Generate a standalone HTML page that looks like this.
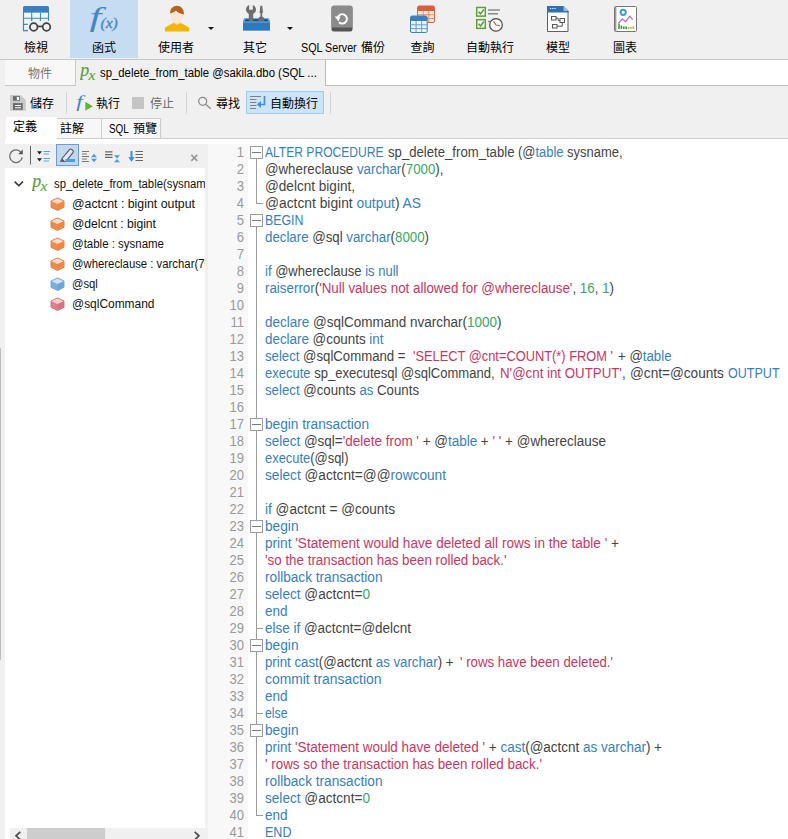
<!DOCTYPE html>
<html lang="zh-Hant">
<head>
<meta charset="utf-8">
<title>sp_delete_from_table @sakila.dbo (SQL Server)</title>
<style>
*{box-sizing:border-box;margin:0;padding:0}
html,body{width:788px;height:839px;overflow:hidden}
body{position:relative;background:#f0f0f0;font-family:"Liberation Sans","Noto Sans CJK TC",sans-serif;font-size:12px;color:#000}
.abs{position:absolute}
/* top toolbar */
#tb{position:absolute;left:0;top:0;width:788px;height:59px;background:#f0f0f0}
#tbline{position:absolute;left:0;top:59px;width:788px;height:1px;background:#c6c6c6}
.tbtn{position:absolute;top:0;height:58px;text-align:center}
.tbtn .lbl{position:absolute;left:-20px;right:-20px;top:38.500px;height:18px;line-height:18px;font-size:12px;white-space:nowrap;color:#000}
.tbtn svg{position:absolute;top:4px;left:50%;margin-left:-16px}
.tbtn.sel{background:#c5dcf2}
.dd{position:absolute;top:26.500px;width:0;height:0;border-left:3.200px solid transparent;border-right:3.200px solid transparent;border-top:3.600px solid #111}
/* tab row */
#tab1{position:absolute;left:5px;top:60px;width:71px;height:26px;background:#f8f8f8;border-right:1px solid #c9c9c9;border-bottom:1px solid #c9c9c9;color:#777;text-align:center;line-height:28px;font-size:12px}
#tab2{position:absolute;left:76px;top:60px;width:249px;height:26px;background:#f0f0f0;line-height:27px;font-size:12px;white-space:nowrap}
#tabrest{position:absolute;left:325px;top:60px;width:463px;height:26px;background:#fff;border-left:1px solid #bdbdbd;border-bottom:1px solid #bdbdbd}
/* second toolbar */
.t2{position:absolute;top:95px;height:18px;line-height:18px;font-size:12px;white-space:nowrap}
.sep{position:absolute;width:1px;background:#d4d4d4}
#wrapbtn{position:absolute;left:246px;top:91px;width:78px;height:23px;background:#cce4f7;border:1px solid #9fcbee}
/* sub tabs */
.stab{position:absolute;top:118px;height:21px;background:#f7f7f7;border:1px solid #cdcdcd;border-left:none;font-size:12px;line-height:20px;white-space:nowrap}
#stab0{position:absolute;left:6px;top:117px;width:51px;height:23px;background:#fff;font-size:12px;line-height:20px}
#subline{position:absolute;left:57px;top:138px;width:731px;height:1px;background:#cdcdcd}
#band{position:absolute;left:5px;top:139px;width:783px;height:5px;background:#fff}
/* left panel */
#ltool{position:absolute;left:5px;top:144px;width:203px;height:24px;background:#f0f0f0}
#tree{position:absolute;left:5px;top:168px;width:200px;height:671px;background:#fff;overflow:hidden}
.trow{position:absolute;left:0;height:20px;line-height:20px;font-size:12px;white-space:nowrap;color:#111}
.trow span{display:inline-block;transform-origin:0 50%}
#hscroll{position:absolute;left:10px;top:828px;width:195px;height:17px;background:#f0f0f0}
#hthumb{position:absolute;left:17px;top:0;width:78px;height:17px;background:#cdcdcd}
/* editor */
#gut0{position:absolute;left:205px;top:144px;width:3px;height:695px;background:#f0f0f0}
#lnbg{position:absolute;left:208px;top:144px;width:40px;height:695px;background:#f8f8f8}
#ed{position:absolute;left:248px;top:144px;width:540px;height:695px;background:#fff}
.ln{position:absolute;left:208px;width:36px;text-align:right;height:17px;line-height:17px;font-size:14px;color:#9a9a9a;transform-origin:100% 50%;transform:scaleX(.93)}
.cl{position:absolute;left:265.5px;height:17px;line-height:17px;font-size:14px;white-space:pre;transform-origin:0 50%;color:#434343}
.b{color:#3580c3}.r{color:#cb365f}.g{color:#36aa63}.d{color:#434343}
.fb{position:absolute;left:250px;width:13px;height:13px;border:1px solid #9c9c9c;background:#fff}
.fb:after{content:"";position:absolute;left:1px;top:5px;width:9px;height:1px;background:#7a7a7a}
.fl{position:absolute;background:#9c9c9c}
</style>
</head>
<body>
<div id="tb">
 <div class="tbtn" style="left:3px;width:66px">
  <svg width="32" height="32" viewBox="0 0 32 32">
   <rect x="3.500" y="8" width="25" height="18.500" fill="#ecf8fd" stroke="#4089bd" stroke-width="1.100"/>
   <path d="M3 3.500A1.500 1.500 0 0 1 4.500 2h23A1.500 1.500 0 0 1 29 3.500V8.300H3z" fill="#3a80c1"/>
   <path d="M11.700 8.500V26M20.500 8.500V20M3.500 14.300H28.500M3.500 20.400H11" stroke="#4089bd" stroke-width="1.100" fill="none"/>
   <path d="M7.800 16.600H30V28H7.800z" fill="#f0f0f0"/>
   <path d="M11.700 14.300V17M20.500 14.300V17M28.500 14V16.800" stroke="#4089bd" stroke-width="1.100" fill="none"/>
   <path d="M3.500 14V26.600H8" stroke="#4089bd" stroke-width="1.100" fill="none"/>
   <circle cx="13.700" cy="23" r="3.800" fill="#f0f0f0" stroke="#404040" stroke-width="1.700"/>
   <circle cx="26.500" cy="23" r="3.800" fill="#f0f0f0" stroke="#404040" stroke-width="1.700"/>
   <path d="M17.500 22.400h5.200" stroke="#404040" stroke-width="1.700"/>
  </svg>
  <div class="lbl">檢視</div>
 </div>
 <div class="tbtn sel" style="left:70px;width:68px;height:58px">
  <svg width="36" height="32" viewBox="0 0 36 32" style="margin-left:-16px">
   <text transform="translate(1.6,22.3) scale(1.58,1)" x="0" y="0" font-family="Liberation Serif,serif" font-style="italic" font-size="27" fill="#4687c2">f</text>
   <text transform="translate(12.4,24.4) scale(1.1,1)" x="0" y="0" font-family="Liberation Serif,serif" font-style="italic" font-size="14.300" fill="#4687c2" stroke="#4687c2" stroke-width=".3">(x)</text>
  </svg>
  <div class="lbl">函式</div>
 </div>
 <div class="tbtn" style="left:143px;width:66px">
  <svg width="32" height="32" viewBox="0 0 32 32">
   <path d="M4.800 27.600v-3.200c0-.700.400-1.200 1.100-1.500l7.600-4.100h7l7.600 4.100c.700.300 1.100.800 1.100 1.500v3.200z" fill="#f2b705"/>
   <path d="M13.400 16.500h7.200v2.400l-3.600 1.800-3.600-1.800z" fill="#fbdcc4"/>
   <ellipse cx="17" cy="10.300" rx="7" ry="8.400" fill="#fde5d3"/>
   <path d="M10.050 9.300C10.200 4.600 13.200 1.800 17 1.800s7 3 7 8.700c-2.600-.300-5.800-1.500-8.300-4-1.200 1.500-3.200 2.500-5.650 2.800z" fill="#b5641e"/>
  </svg>
  <div class="lbl">使用者</div>
 </div>
 <div class="dd" style="left:208px"></div>
 <div class="tbtn" style="left:222px;width:66px">
  <svg width="34" height="32" viewBox="0 0 34 32" style="margin-left:-16px">
   <path d="M5.500 14h24l1.500 2.500v10h-27v-10z" fill="#63aae0"/>
   <path d="M6.500 15.200h22l1 2.300h-24z" fill="#1b4a7a"/>
   <path d="M10.200 1v4.800h3.600v-4.800c2 .8 3.200 2.600 3.200 4.600 0 2-1.100 3.500-2.800 4.300v9.300h-4.400v-9.300c-1.700-.8-2.800-2.300-2.800-4.300 0-2 1.200-3.800 3.200-4.600z" fill="#6e6e6e"/>
   <path d="M21.300 1.800h2l.7 7.200h-.8v3.500c1.400.4 2.100 1.500 2.100 3v4h-6v-4c0-1.500.700-2.600 2.100-3v-3.500h-.8z" fill="#6e6e6e"/>
   <rect x="4" y="17.500" width="27" height="9" fill="#2f7abf"/>
   <path d="M4 17.500h27v1.200h-27z" fill="#5a9fd8"/>
  </svg>
  <div class="lbl">其它</div>
 </div>
 <div class="dd" style="left:287px"></div>
 <div class="tbtn" style="left:300px;width:85px">
  <svg width="32" height="32" viewBox="0 0 32 32" style="margin-left:-16px">
   <rect x="4.500" y="1.700" width="21" height="25.700" rx="2.200" fill="#555"/>
   <path d="M4.500 3.900a2.200 2.200 0 0 1 2.200-2.200h16.600a2.200 2.200 0 0 1 2.200 2.200v19.600h-21z" fill="#8b8b8b"/>
   <path d="M10.700 13.600a4.700 4.700 0 1 1 1.300 4.700" fill="none" stroke="#fff" stroke-width="1.900"/>
   <path d="M7.600 12.400h5.800l-1.800 5z" fill="#fff"/>
  </svg>
  <div class="lbl" style="text-align:left;left:1.300px"><span id="sqlsrv" style="display:inline-block;transform-origin:0 50%;transform:scaleX(0.8948)">SQL Server</span><span class="abs" style="left:59.700px;top:0">備份</span></div>
 </div>
 <div class="tbtn" style="left:390px;width:65px">
  <svg width="32" height="32" viewBox="0 0 32 32">
   <rect x="10.500" y="2" width="17" height="16.500" rx="1.500" fill="#fbe9e2" stroke="#d8603a" stroke-width="1"/>
   <path d="M10.500 3.500a1.500 1.500 0 0 1 1.500-1.500h14a1.500 1.500 0 0 1 1.500 1.500v3.500h-17z" fill="#d8603a"/>
   <path d="M16.200 7v11.500M21.800 7v11.500M10.500 10.800h17M10.500 14.600h17" stroke="#e38a6c" stroke-width="1" fill="none"/>
   <rect x="3.500" y="12" width="16.700" height="16.500" rx="1.500" fill="#eaf4fb" stroke="#3a80c1" stroke-width="1"/>
   <path d="M3.500 13.500a1.500 1.500 0 0 1 1.500-1.500h13.700a1.500 1.500 0 0 1 1.500 1.500v3.500h-16.700z" fill="#3a80c1"/>
   <path d="M9.100 17v11.500M14.700 17v11.500M3.500 20.800h16.700M3.500 24.600h16.700" stroke="#5fa3d6" stroke-width="1" fill="none"/>
  </svg>
  <div class="lbl">查詢</div>
 </div>
 <div class="tbtn" style="left:457px;width:66px">
  <svg width="32" height="32" viewBox="0 0 32 32">
   <rect x="2.700" y="3.500" width="8.600" height="8.600" fill="#fff" stroke="#5c9e38" stroke-width="1.500"/>
   <path d="M4.500 7.600l2 2.200 3.400-4.400" fill="none" stroke="#5c9e38" stroke-width="1.600"/>
   <rect x="2.700" y="15.700" width="8.600" height="8.600" fill="#fff" stroke="#5c9e38" stroke-width="1.500"/>
   <path d="M4.500 19.800l2 2.200 3.400-4.400" fill="none" stroke="#5c9e38" stroke-width="1.600"/>
   <path d="M14 6h12M14 9.700h10M14 17.500h2" stroke="#8a8a8a" stroke-width="1.600"/>
   <circle cx="22" cy="20.900" r="6.300" fill="#fff" stroke="#444" stroke-width="1.200"/>
   <path d="M19.600 17.400l2.400 3.600 3.800.500" fill="none" stroke="#d0453a" stroke-width="1.100"/>
  </svg>
  <div class="lbl">自動執行</div>
 </div>
 <div class="tbtn" style="left:525px;width:66px">
  <svg width="32" height="32" viewBox="0 0 32 32">
   <path d="M5.500 2.500h16l4.500 4.500v20.500h-20.500z" fill="#fff" stroke="#5f5f5f" stroke-width="1"/>
   <path d="M5 2h16.500l5 5v1.500h-21.500z" fill="#2f6fb0"/>
   <path d="M21.500 2l5 5h-5z" fill="#8fc0e8"/>
   <path d="M8 4.500h1.200M10.200 4.500h1.200M12.400 4.500h1.200" stroke="#fff" stroke-width="1.200"/>
   <rect x="9.500" y="12.500" width="4.500" height="3.500" fill="#fff" stroke="#555" stroke-width="1"/>
   <rect x="18" y="14.500" width="4.500" height="4" fill="#fff" stroke="#555" stroke-width="1"/>
   <rect x="10.500" y="20.500" width="4.500" height="3.500" fill="#fff" stroke="#555" stroke-width="1"/>
   <path d="M14 14.200h2.200v2.300h1.800M15 22.200h5.300v-3.700" fill="none" stroke="#555" stroke-width="1"/>
  </svg>
  <div class="lbl">模型</div>
 </div>
 <div class="tbtn" style="left:592px;width:66px">
  <svg width="32" height="32" viewBox="0 0 32 32">
   <rect x="5.500" y="2.500" width="22" height="25" rx="1" fill="#fff" stroke="#777" stroke-width="1"/>
   <path d="M6.700 2.500v25" stroke="#9a9a9a" stroke-width="1.400"/>
   <circle cx="14.200" cy="8.300" r="2.600" fill="none" stroke="#3e9bd6" stroke-width="2"/>
   <path d="M9.500 19l4-4 3.200 2.600 4-5.400 3 3.400" fill="none" stroke="#c060b8" stroke-width="1.200"/>
   <path d="M10 19.500v5.500M12.400 21.500v3.500M14.800 22.500v2.500M17.200 22.500v2.500" stroke="#3f9a3a" stroke-width="1.600"/>
   <path d="M19.600 23v2M22 23v2M24.300 22.300v2.700" stroke="#a6c83a" stroke-width="1.600"/>
  </svg>
  <div class="lbl">圖表</div>
 </div>
</div>
<div id="tbline"></div>

<div id="tab1">物件</div>
<div id="tab2">
 <svg class="abs" style="left:4px;top:5px" width="20" height="18" viewBox="0 0 20 18"><text x="0.300" y="11" font-family="Liberation Serif,serif" font-style="italic" font-size="18" fill="#5a9e3c" stroke="#5a9e3c" stroke-width=".15">p</text><text x="8.400" y="14.8" font-family="Liberation Serif,serif" font-style="italic" font-size="15.500" fill="#5a9e3c" stroke="#5a9e3c" stroke-width=".15">x</text></svg>
 <span id="tab2t" class="abs" style="left:23.700px;top:0;transform-origin:0 50%;display:inline-block;transform:scaleX(0.9459)">sp_delete_from_table @sakila.dbo (SQL ...</span>
</div>
<div id="tabrest"></div>

<!-- second toolbar -->
<svg class="abs" style="left:9px;top:94px" width="18" height="18" viewBox="0 0 18 18">
 <path d="M1 1h10.600l5.200 5.200v10.500h-15.800z" fill="#c8c8c8"/>
 <rect x="4" y="2.100" width="6.900" height="4.600" fill="#6a6a6a"/>
 <rect x="7.800" y="2.900" width="2.300" height="3.100" fill="#fff"/>
 <rect x="4" y="9.100" width="9.700" height="6.700" fill="#6a6a6a"/>
 <path d="M6 11.500h6M6 13.700h6" stroke="#fff" stroke-width="1.100"/>
</svg>
<div class="t2" style="left:30px">儲存</div>
<div class="sep" style="left:66px;top:92px;height:22px"></div>
<svg class="abs" style="left:74px;top:92px" width="22" height="22" viewBox="0 0 22 22">
 <text transform="translate(2.300,15.400) scale(1.35,1)" font-family="Liberation Serif,serif" font-style="italic" font-size="17" fill="#3f86c6">f</text>
 <path d="M11.300 9.700l7.600 4.500-7.600 4.500z" fill="#5fb634"/>
</svg>
<div class="t2" style="left:96px">執行</div>
<div class="abs" style="left:132px;top:97px;width:12px;height:12px;background:#c4c4c4"></div>
<div class="t2" style="left:150px;color:#6a6a6a">停止</div>
<div class="sep" style="left:186px;top:92px;height:22px"></div>
<svg class="abs" style="left:196px;top:94px" width="18" height="18" viewBox="0 0 18 18">
 <circle cx="6.700" cy="7.300" r="4" fill="none" stroke="#8a8a8a" stroke-width="1.200"/>
 <path d="M9.600 10.300l5.200 4.400" stroke="#8a8a8a" stroke-width="1.300"/>
</svg>
<div class="t2" style="left:216px">尋找</div>
<div id="wrapbtn"></div>
<svg class="abs" style="left:249px;top:94px" width="20" height="18" viewBox="0 0 20 18">
 <path d="M1 2.500h11M1 5.500h6.500M1 8.500h6.500M1 11.500h6.500M1 14.500h6" stroke="#808080" stroke-width="1"/>
 <path d="M15.500 2v8.500h-4.500" fill="none" stroke="#3f90d8" stroke-width="1.700"/>
 <path d="M7.800 10.500l4.200-3.400v6.800z" fill="#3f90d8"/>
</svg>
<div class="t2" style="left:270px">自動換行</div>
<div class="sep" style="left:330px;top:92px;height:22px"></div>

<!-- sub tabs -->
<div class="stab" style="left:57px;width:45px;padding-left:3px">註解</div>
<div class="stab" style="left:102px;width:59px"><span id="sqlprev" class="abs" style="left:7.400px;top:0;transform-origin:0 50%;transform:scaleX(0.8245)">SQL</span><span class="abs" style="left:31px;top:0">預覽</span></div>
<div id="subline"></div>
<div id="band"></div>
<div id="stab0"><span class="abs" style="left:7px;top:0">定義</span></div>



<div id="ltool"></div>
<svg class="abs" style="left:5px;top:144px" width="203" height="24" viewBox="5 144 203 24">
 <!-- refresh -->
 <path d="M21.300 152.800a6.300 6.300 0 1 0 .900 4.600" fill="none" stroke="#6a6a6a" stroke-width="1.300"/>
 <path d="M22.800 149.600v4.600h-4.600z" fill="#555"/>
 <path d="M30.500 146v18.500" stroke="#666" stroke-width="1"/>
 <!-- expand -->
 <path d="M37 151.300h5l-2.500 3.300zM37 158.200h5l-2.500 3.300z" fill="#222"/>
 <path d="M43.500 151.500h6.500M43.500 158.500h6.500" stroke="#4aa3dc" stroke-width="1"/>
 <path d="M43.500 154h5.500M43.500 161h5.500" stroke="#5fa8d8" stroke-width="1"/>
 <!-- highlighter selected -->
 <rect x="56.500" y="144.500" width="22" height="21" fill="#c3d7f0" stroke="#6c9bd9" stroke-width="1"/>
 <path d="M62 158.500l7.500-8.800c.6-.7 1.700-.8 2.400-.2l.9.800c.7.600.8 1.600.2 2.300l-7 8.600-3.200.300z" fill="#dfe8f4" stroke="#555" stroke-width="1.100" stroke-linejoin="round"/>
 <path d="M59.500 162l2.600-3.500 2.800 2.700z" fill="#555"/>
 <rect x="65.500" y="159" width="9.500" height="3" fill="#4a9ede"/>
 <!-- icon4 -->
 <path d="M82 151.500h7M82 154h5M82 156.500h7M82 159h5M82 161.500h7" stroke="#777" stroke-width="1"/>
 <path d="M91 157.200h6l-3-3.400zM91 158.800h6l-3 3.400z" fill="#4a9ede"/>
 <!-- icon5 -->
 <path d="M105 151.800h7.500M105 154.600h7.500M105 157.400h7.500" stroke="#666" stroke-width="1.300"/>
 <path d="M114 155.200h6l-3 3.200zM114 162.200h6l-3-3.200z" fill="#4a9ede"/>
 <!-- icon6 -->
 <path d="M131.500 151v7.500" stroke="#3f90d8" stroke-width="2"/>
 <path d="M128.300 157.200h6.400l-3.200 4.600z" fill="#3f90d8"/>
 <path d="M135.500 151.500h7.500M135.500 154.500h7.500M135.500 157.500h7.500M135.500 160.500h7.500" stroke="#666" stroke-width="1.200"/>
 <!-- close -->
 <path d="M191.300 154.800l6 6M197.300 154.800l-6 6" stroke="#9a9a9a" stroke-width="1.700"/>
</svg>

<div id="tree">
<svg class="abs" style="left:8px;top:11px" width="12" height="9" viewBox="0 0 12 9"><path d="M1.700 2.600l4.100 4.100 4.100-4.100" fill="none" stroke="#333" stroke-width="1.600"/></svg>
<svg class="abs" style="left:27px;top:7px" width="20" height="18" viewBox="0 0 20 18"><text x="0.300" y="12" font-family="Liberation Serif,serif" font-style="italic" font-size="18" fill="#5a9e3c" stroke="#5a9e3c" stroke-width=".15">p</text><text x="8.400" y="15.8" font-family="Liberation Serif,serif" font-style="italic" font-size="15.500" fill="#5a9e3c" stroke="#5a9e3c" stroke-width=".15">x</text></svg>
<div class="trow" style="left:49.2px;top:6px"><span style="transform:scaleX(0.9442)"><span id="tr0">sp_delete_from_table(sysnam</span>e, varchar(7000), bigint, bigint)</span></div>
<svg class="abs" style="left:45.4px;top:28.5px" width="15" height="14" viewBox="0 0 15 14"><path d="M7.500 .900l6.500 3.100v6.300l-6.500 3.200-6.500-3.200v-6.300z" fill="#ee8a4e" stroke="#d4824e" stroke-width=".9" stroke-linejoin="round"/><path d="M7.500 7.200l6.300-3v6l-6.300 3.100z" fill="#f4853a"/><path d="M7.500 1.500l5.900 2.700-5.900 2.900-5.900-2.900z" fill="#fbdcc6"/></svg>
<div class="trow" style="left:67.0px;top:26px"><span style="transform:scaleX(1.0285)"><span id="tr1">@actcnt : bigint output</span></span></div>
<svg class="abs" style="left:45.4px;top:48.5px" width="15" height="14" viewBox="0 0 15 14"><path d="M7.500 .900l6.500 3.100v6.300l-6.500 3.200-6.500-3.200v-6.300z" fill="#ee8a4e" stroke="#d4824e" stroke-width=".9" stroke-linejoin="round"/><path d="M7.500 7.200l6.300-3v6l-6.300 3.100z" fill="#f4853a"/><path d="M7.500 1.500l5.900 2.700-5.900 2.900-5.900-2.900z" fill="#fbdcc6"/></svg>
<div class="trow" style="left:67.0px;top:46px"><span style="transform:scaleX(1.0132)"><span id="tr2">@delcnt : bigint</span></span></div>
<svg class="abs" style="left:45.4px;top:68.5px" width="15" height="14" viewBox="0 0 15 14"><path d="M7.500 .900l6.500 3.100v6.300l-6.500 3.200-6.500-3.200v-6.300z" fill="#ee8a4e" stroke="#d4824e" stroke-width=".9" stroke-linejoin="round"/><path d="M7.500 7.200l6.300-3v6l-6.300 3.100z" fill="#f4853a"/><path d="M7.500 1.500l5.900 2.700-5.900 2.900-5.900-2.900z" fill="#fbdcc6"/></svg>
<div class="trow" style="left:67.0px;top:66px"><span style="transform:scaleX(0.9560)"><span id="tr3">@table : sysname</span></span></div>
<svg class="abs" style="left:45.4px;top:88.5px" width="15" height="14" viewBox="0 0 15 14"><path d="M7.500 .900l6.500 3.100v6.300l-6.500 3.200-6.500-3.200v-6.300z" fill="#ee8a4e" stroke="#d4824e" stroke-width=".9" stroke-linejoin="round"/><path d="M7.500 7.200l6.300-3v6l-6.300 3.100z" fill="#f4853a"/><path d="M7.500 1.500l5.900 2.700-5.900 2.900-5.900-2.900z" fill="#fbdcc6"/></svg>
<div class="trow" style="left:67.0px;top:86px"><span style="transform:scaleX(0.9447)"><span id="tr4">@whereclause : varchar(7</span>000)</span></div>
<svg class="abs" style="left:45.4px;top:108.5px" width="15" height="14" viewBox="0 0 15 14"><path d="M7.500 .900l6.500 3.100v6.300l-6.500 3.200-6.500-3.200v-6.300z" fill="#7ab0dc" stroke="#6f9fca" stroke-width=".9" stroke-linejoin="round"/><path d="M7.500 7.200l6.300-3v6l-6.300 3.100z" fill="#6ba6d8"/><path d="M7.500 1.500l5.900 2.700-5.900 2.900-5.900-2.900z" fill="#cfe4f7"/></svg>
<div class="trow" style="left:67.0px;top:106px"><span style="transform:scaleX(0.9371)"><span id="tr5">@sql</span></span></div>
<svg class="abs" style="left:45.4px;top:128.5px" width="15" height="14" viewBox="0 0 15 14"><path d="M7.500 .900l6.500 3.100v6.300l-6.500 3.200-6.500-3.200v-6.300z" fill="#e0808a" stroke="#c8707a" stroke-width=".9" stroke-linejoin="round"/><path d="M7.500 7.200l6.300-3v6l-6.300 3.100z" fill="#da727e"/><path d="M7.500 1.500l5.900 2.700-5.900 2.900-5.900-2.900z" fill="#f5cdd2"/></svg>
<div class="trow" style="left:67.0px;top:126px"><span style="transform:scaleX(0.9955)"><span id="tr6">@sqlCommand</span></span></div>
</div>
<div id="hscroll"><div id="hthumb"></div><svg class="abs" style="left:4px;top:3px" width="9" height="9" viewBox="0 0 9 9"><path d="M6.300 .800l-4.200 4 4.200 4" fill="none" stroke="#505050" stroke-width="1.800"/></svg><svg class="abs" style="left:182px;top:3px" width="9" height="9" viewBox="0 0 9 9"><path d="M2.700 .800l4.200 4-4.200 4" fill="none" stroke="#505050" stroke-width="1.800"/></svg></div>
<div class="abs" style="left:0;top:348px;width:1px;height:312px;background:#bcbcbc"></div>
<div id="gut0"></div><div id="lnbg"></div><div id="ed"></div>
<div class="ln" style="top:143.5px">1</div>
<div class="ln" style="top:160.5px">2</div>
<div class="ln" style="top:177.5px">3</div>
<div class="ln" style="top:194.5px">4</div>
<div class="ln" style="top:211.5px">5</div>
<div class="ln" style="top:228.5px">6</div>
<div class="ln" style="top:245.5px">7</div>
<div class="ln" style="top:262.5px">8</div>
<div class="ln" style="top:279.5px">9</div>
<div class="ln" style="top:296.5px">10</div>
<div class="ln" style="top:313.5px">11</div>
<div class="ln" style="top:330.5px">12</div>
<div class="ln" style="top:347.5px">13</div>
<div class="ln" style="top:364.5px">14</div>
<div class="ln" style="top:381.5px">15</div>
<div class="ln" style="top:398.5px">16</div>
<div class="ln" style="top:415.5px">17</div>
<div class="ln" style="top:432.5px">18</div>
<div class="ln" style="top:449.5px">19</div>
<div class="ln" style="top:466.5px">20</div>
<div class="ln" style="top:483.5px">21</div>
<div class="ln" style="top:500.5px">22</div>
<div class="ln" style="top:517.5px">23</div>
<div class="ln" style="top:534.5px">24</div>
<div class="ln" style="top:551.5px">25</div>
<div class="ln" style="top:568.5px">26</div>
<div class="ln" style="top:585.5px">27</div>
<div class="ln" style="top:602.5px">28</div>
<div class="ln" style="top:619.5px">29</div>
<div class="ln" style="top:636.5px">30</div>
<div class="ln" style="top:653.5px">31</div>
<div class="ln" style="top:670.5px">32</div>
<div class="ln" style="top:687.5px">33</div>
<div class="ln" style="top:704.5px">34</div>
<div class="ln" style="top:721.5px">35</div>
<div class="ln" style="top:738.5px">36</div>
<div class="ln" style="top:755.5px">37</div>
<div class="ln" style="top:772.5px">38</div>
<div class="ln" style="top:789.5px">39</div>
<div class="ln" style="top:806.5px">40</div>
<div class="ln" style="top:823.5px">41</div>
<div class="fl" style="left:256px;top:158px;width:1px;height:46px"></div>
<div class="fl" style="left:256px;top:203px;width:7px;height:1px"></div>
<div class="fl" style="left:256px;top:226px;width:1px;height:590px"></div>
<div class="fl" style="left:256px;top:815px;width:7px;height:1px"></div>
<div class="fl" style="left:256px;top:628px;width:7px;height:1px"></div>
<div class="fl" style="left:256px;top:713px;width:7px;height:1px"></div>
<div class="fb" style="top:146px"></div>
<div class="fb" style="top:214px"></div>
<div class="fb" style="top:418px"></div>
<div class="fb" style="top:520px"></div>
<div class="fb" style="top:639px"></div>
<div class="fb" style="top:724px"></div>
<div class="cl" id="c1_0" style="left:265.0px;top:143.5px;transform:scaleX(0.8622)"><span class="b">ALTER PROCEDURE</span></div>
<div class="cl" id="c1_1" style="left:387.5px;top:143.5px;transform:scaleX(0.9394)"><span class="d">sp_delete_from_table</span></div>
<div class="cl" id="c1_2" style="left:518px;top:143.5px;transform:scaleX(0.9244)"><span class="d">(@</span><span class="b">table</span><span class="d"> sysname,</span></div>
<div class="cl" id="c2_0" style="left:265.0px;top:160.5px;transform:scaleX(0.9506)"><span class="d">@whereclause </span><span class="b">varchar</span><span class="d">(</span><span class="g">7000</span><span class="d">),</span></div>
<div class="cl" id="c3_0" style="left:265.0px;top:177.5px;transform:scaleX(0.9695)"><span class="d">@delcnt bigint,</span></div>
<div class="cl" id="c4_0" style="left:265.0px;top:194.5px;transform:scaleX(0.9860)"><span class="d">@actcnt bigint </span><span class="b">output</span><span class="d">) </span><span class="b">AS</span></div>
<div class="cl" id="c5_0" style="left:265.0px;top:211.5px;transform:scaleX(0.8835)"><span class="b">BEGIN</span></div>
<div class="cl" id="c6_0" style="left:265.0px;top:228.5px;transform:scaleX(0.9480)"><span class="b">declare</span><span class="d"> @sql </span><span class="b">varchar</span><span class="d">(</span><span class="g">8000</span><span class="d">)</span></div>
<div class="cl" id="c8_0" style="left:265.0px;top:262.5px;transform:scaleX(0.9310)"><span class="b">if</span><span class="d"> @whereclause </span><span class="b">is null</span></div>
<div class="cl" id="c9_0" style="left:265.0px;top:279.5px;transform:scaleX(0.9539)"><span class="b">raiserror</span><span class="d">(</span><span class="r">'Null values not allowed for @whereclause'</span><span class="d">, </span><span class="g">16</span><span class="d">, </span><span class="g">1</span><span class="d">)</span></div>
<div class="cl" id="c11_0" style="left:265.0px;top:313.5px;transform:scaleX(0.9639)"><span class="b">declare</span><span class="d"> @sqlCommand nvarchar(</span><span class="g">1000</span><span class="d">)</span></div>
<div class="cl" id="c12_0" style="left:265.0px;top:330.5px;transform:scaleX(0.9559)"><span class="b">declare</span><span class="d"> @counts </span><span class="b">int</span></div>
<div class="cl" id="c13_0" style="left:265.0px;top:347.5px;transform:scaleX(0.9415)"><span class="b">select</span><span class="d"> @sqlCommand =</span></div>
<div class="cl" id="c13_1" style="left:413px;top:347.5px;transform:scaleX(0.9172)"><span class="r">'SELECT @cnt=COUNT(*) FROM '</span></div>
<div class="cl" id="c13_2" style="left:618px;top:347.5px;transform:scaleX(0.9446)"><span class="d">+ @</span><span class="b">table</span></div>
<div class="cl" id="c14_0" style="left:265.0px;top:364.5px;transform:scaleX(0.9295)"><span class="b">execute</span><span class="d"> sp_executesql @sqlCommand,</span></div>
<div class="cl" id="c14_1" style="left:500.4px;top:364.5px;transform:scaleX(0.9489)"><span class="r">N'@cnt int OUTPUT'</span><span class="d">,</span></div>
<div class="cl" id="c14_2" style="left:629.9px;top:364.5px;transform:scaleX(0.9727)"><span class="d">@cnt=@counts</span></div>
<div class="cl" id="c14_3" style="left:728.4px;top:364.5px;transform:scaleX(0.8964)"><span class="b">OUTPUT</span></div>
<div class="cl" id="c15_0" style="left:265.0px;top:381.5px;transform:scaleX(0.9455)"><span class="b">select</span><span class="d"> @counts </span><span class="b">as</span><span class="d"> Counts</span></div>
<div class="cl" id="c17_0" style="left:265.0px;top:415.5px;transform:scaleX(0.9752)"><span class="b">begin transaction</span></div>
<div class="cl" id="c18_0" style="left:265.0px;top:432.5px;transform:scaleX(0.9617)"><span class="b">select</span><span class="d"> @sql=</span><span class="r">'delete from '</span><span class="d"> + @</span><span class="b">table</span><span class="d"> + </span><span class="r">' '</span><span class="d"> + @whereclause</span></div>
<div class="cl" id="c19_0" style="left:265.0px;top:449.5px;transform:scaleX(0.9228)"><span class="b">execute</span><span class="d">(@sql)</span></div>
<div class="cl" id="c20_0" style="left:265.0px;top:466.5px;transform:scaleX(0.9760)"><span class="b">select</span><span class="d"> @actcnt=@@</span><span class="b">rowcount</span></div>
<div class="cl" id="c22_0" style="left:265.0px;top:500.5px;transform:scaleX(0.9711)"><span class="b">if</span><span class="d"> @actcnt = @counts</span></div>
<div class="cl" id="c23_0" style="left:265.0px;top:517.5px;transform:scaleX(0.9777)"><span class="b">begin</span></div>
<div class="cl" id="c24_0" style="left:265.0px;top:534.5px;transform:scaleX(0.9711)"><span class="b">print</span><span class="d"> </span><span class="r">'Statement would have deleted all rows in the table '</span><span class="d"> +</span></div>
<div class="cl" id="c25_0" style="left:265.0px;top:551.5px;transform:scaleX(0.9551)"><span class="r">'so the transaction has been rolled back.'</span></div>
<div class="cl" id="c26_0" style="left:265.0px;top:568.5px;transform:scaleX(0.9741)"><span class="b">rollback transaction</span></div>
<div class="cl" id="c27_0" style="left:265.0px;top:585.5px;transform:scaleX(0.9721)"><span class="b">select</span><span class="d"> @actcnt=</span><span class="g">0</span></div>
<div class="cl" id="c28_0" style="left:265.0px;top:602.5px;transform:scaleX(0.9632)"><span class="b">end</span></div>
<div class="cl" id="c29_0" style="left:265.0px;top:619.5px;transform:scaleX(0.9619)"><span class="b">else if</span><span class="d"> @actcnt=@delcnt</span></div>
<div class="cl" id="c30_0" style="left:265.0px;top:636.5px;transform:scaleX(0.9777)"><span class="b">begin</span></div>
<div class="cl" id="c31_0" style="left:265.0px;top:653.5px;transform:scaleX(0.9471)"><span class="b">print cast</span><span class="d">(@actcnt </span><span class="b">as varchar</span><span class="d">) +</span></div>
<div class="cl" id="c31_1" style="left:459.5px;top:653.5px;transform:scaleX(0.9462)"><span class="r">' rows have been deleted.'</span></div>
<div class="cl" id="c32_0" style="left:265.0px;top:670.5px;transform:scaleX(0.9916)"><span class="b">commit transaction</span></div>
<div class="cl" id="c33_0" style="left:265.0px;top:687.5px;transform:scaleX(0.9632)"><span class="b">end</span></div>
<div class="cl" id="c34_0" style="left:265.0px;top:704.5px;transform:scaleX(0.8759)"><span class="b">else</span></div>
<div class="cl" id="c35_0" style="left:265.0px;top:721.5px;transform:scaleX(0.9777)"><span class="b">begin</span></div>
<div class="cl" id="c36_0" style="left:265.0px;top:738.5px;transform:scaleX(0.9622)"><span class="b">print</span><span class="d"> </span><span class="r">'Statement would have deleted '</span><span class="d"> + </span><span class="b">cast</span><span class="d">(@actcnt </span><span class="b">as varchar</span><span class="d">) +</span></div>
<div class="cl" id="c37_0" style="left:265.0px;top:755.5px;transform:scaleX(0.9546)"><span class="r">' rows so the transaction has been rolled back.'</span></div>
<div class="cl" id="c38_0" style="left:265.0px;top:772.5px;transform:scaleX(0.9741)"><span class="b">rollback transaction</span></div>
<div class="cl" id="c39_0" style="left:265.0px;top:789.5px;transform:scaleX(0.9721)"><span class="b">select</span><span class="d"> @actcnt=</span><span class="g">0</span></div>
<div class="cl" id="c40_0" style="left:265.0px;top:806.5px;transform:scaleX(0.9632)"><span class="b">end</span></div>
<div class="cl" id="c41_0" style="left:265.0px;top:823.5px;transform:scaleX(0.8964)"><span class="b">END</span></div>
</body>
</html>
